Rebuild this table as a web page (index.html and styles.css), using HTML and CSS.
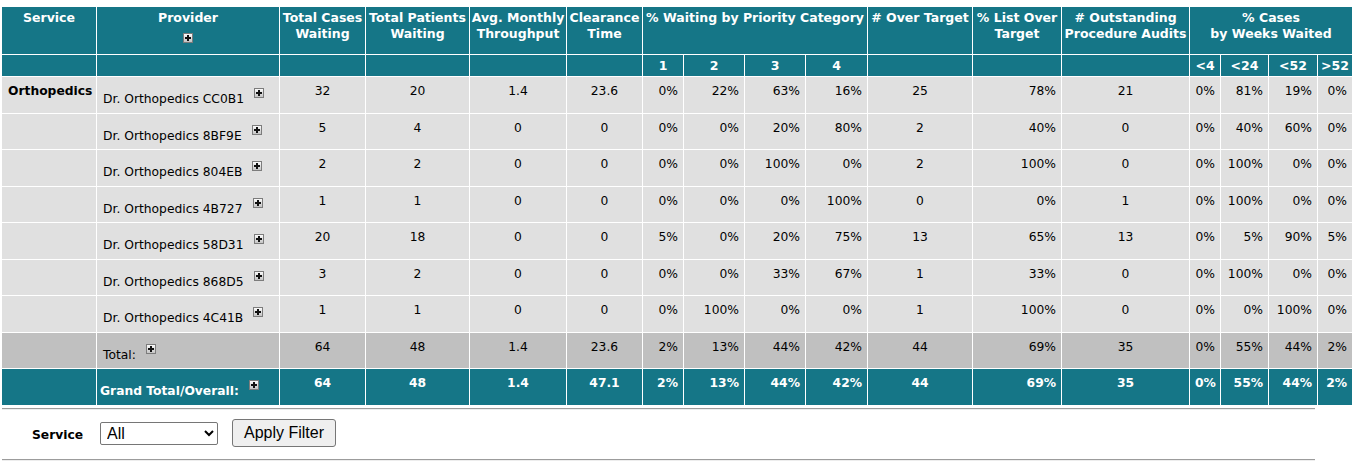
FILE: index.html
```html
<!DOCTYPE html>
<html>
<head>
<meta charset="utf-8">
<link rel="stylesheet" href="styles.css">
</head>
<body>
<table class="grid">
<colgroup>
<col class="w-svc"><col class="w-prov"><col class="w-tc"><col class="w-tp"><col class="w-avg"><col class="w-clr"><col class="w-p1"><col class="w-p2"><col class="w-p3"><col class="w-p4"><col class="w-over"><col class="w-list"><col class="w-aud"><col class="w-k1"><col class="w-k2"><col class="w-k3"><col class="w-k4">
</colgroup>
<thead>
<tr class="hd hd1">
<th>Service</th>
<th>Provider<br><i class="plus"></i></th>
<th>Total Cases<br>Waiting</th>
<th>Total Patients<br>Waiting</th>
<th>Avg. Monthly<br>Throughput</th>
<th>Clearance<br>Time</th>
<th colspan="4">% Waiting by Priority Category</th>
<th># Over Target</th>
<th>% List Over<br>Target</th>
<th># Outstanding<br>Procedure Audits</th>
<th colspan="4">% Cases<br>by Weeks Waited</th>
</tr>
<tr class="hd hd2">
<th></th><th></th><th></th><th></th><th></th><th></th>
<th>1</th><th>2</th><th>3</th><th>4</th>
<th></th><th></th><th></th>
<th>&lt;4</th><th>&lt;24</th><th>&lt;52</th><th>&gt;52</th>
</tr>
</thead>
<tbody>
<tr class="row">
<td class="svc">Orthopedics</td>
<td class="prov"><div class="pv"><span class="nm">Dr. Orthopedics CC0B1</span><i class="plus"></i></div></td>
<td class="c">32</td><td class="c">20</td><td class="c">1.4</td><td class="c">23.6</td>
<td class="r">0%</td><td class="r">22%</td><td class="r">63%</td><td class="r">16%</td>
<td class="c">25</td><td class="r">78%</td><td class="c">21</td>
<td class="r">0%</td><td class="r">81%</td><td class="r">19%</td><td class="r">0%</td>
</tr>
<tr class="row">
<td class="svc"></td>
<td class="prov"><div class="pv"><span class="nm">Dr. Orthopedics 8BF9E</span><i class="plus"></i></div></td>
<td class="c">5</td><td class="c">4</td><td class="c">0</td><td class="c">0</td>
<td class="r">0%</td><td class="r">0%</td><td class="r">20%</td><td class="r">80%</td>
<td class="c">2</td><td class="r">40%</td><td class="c">0</td>
<td class="r">0%</td><td class="r">40%</td><td class="r">60%</td><td class="r">0%</td>
</tr>
<tr class="row">
<td class="svc"></td>
<td class="prov"><div class="pv"><span class="nm">Dr. Orthopedics 804EB</span><i class="plus"></i></div></td>
<td class="c">2</td><td class="c">2</td><td class="c">0</td><td class="c">0</td>
<td class="r">0%</td><td class="r">0%</td><td class="r">100%</td><td class="r">0%</td>
<td class="c">2</td><td class="r">100%</td><td class="c">0</td>
<td class="r">0%</td><td class="r">100%</td><td class="r">0%</td><td class="r">0%</td>
</tr>
<tr class="row">
<td class="svc"></td>
<td class="prov"><div class="pv"><span class="nm">Dr. Orthopedics 4B727</span><i class="plus"></i></div></td>
<td class="c">1</td><td class="c">1</td><td class="c">0</td><td class="c">0</td>
<td class="r">0%</td><td class="r">0%</td><td class="r">0%</td><td class="r">100%</td>
<td class="c">0</td><td class="r">0%</td><td class="c">1</td>
<td class="r">0%</td><td class="r">100%</td><td class="r">0%</td><td class="r">0%</td>
</tr>
<tr class="row">
<td class="svc"></td>
<td class="prov"><div class="pv"><span class="nm">Dr. Orthopedics 58D31</span><i class="plus"></i></div></td>
<td class="c">20</td><td class="c">18</td><td class="c">0</td><td class="c">0</td>
<td class="r">5%</td><td class="r">0%</td><td class="r">20%</td><td class="r">75%</td>
<td class="c">13</td><td class="r">65%</td><td class="c">13</td>
<td class="r">0%</td><td class="r">5%</td><td class="r">90%</td><td class="r">5%</td>
</tr>
<tr class="row">
<td class="svc"></td>
<td class="prov"><div class="pv"><span class="nm">Dr. Orthopedics 868D5</span><i class="plus"></i></div></td>
<td class="c">3</td><td class="c">2</td><td class="c">0</td><td class="c">0</td>
<td class="r">0%</td><td class="r">0%</td><td class="r">33%</td><td class="r">67%</td>
<td class="c">1</td><td class="r">33%</td><td class="c">0</td>
<td class="r">0%</td><td class="r">100%</td><td class="r">0%</td><td class="r">0%</td>
</tr>
<tr class="row">
<td class="svc"></td>
<td class="prov"><div class="pv"><span class="nm">Dr. Orthopedics 4C41B</span><i class="plus"></i></div></td>
<td class="c">1</td><td class="c">1</td><td class="c">0</td><td class="c">0</td>
<td class="r">0%</td><td class="r">100%</td><td class="r">0%</td><td class="r">0%</td>
<td class="c">1</td><td class="r">100%</td><td class="c">0</td>
<td class="r">0%</td><td class="r">0%</td><td class="r">100%</td><td class="r">0%</td>
</tr>
<tr class="row total">
<td class="svc"></td>
<td class="prov"><div class="pv"><span class="nm">Total:</span><i class="plus"></i></div></td>
<td class="c">64</td><td class="c">48</td><td class="c">1.4</td><td class="c">23.6</td>
<td class="r">2%</td><td class="r">13%</td><td class="r">44%</td><td class="r">42%</td>
<td class="c">44</td><td class="r">69%</td><td class="c">35</td>
<td class="r">0%</td><td class="r">55%</td><td class="r">44%</td><td class="r">2%</td>
</tr>
<tr class="row grand">
<td class="svc"></td>
<td class="prov"><div class="pv"><span class="nm gname">Grand Total/Overall:</span><i class="plus"></i></div></td>
<td class="c">64</td><td class="c">48</td><td class="c">1.4</td><td class="c">47.1</td>
<td class="r">2%</td><td class="r">13%</td><td class="r">44%</td><td class="r">42%</td>
<td class="c">44</td><td class="r">69%</td><td class="c">35</td>
<td class="r">0%</td><td class="r">55%</td><td class="r">44%</td><td class="r">2%</td>
</tr>
</tbody>
</table>
<hr class="sep">
<div class="filter">
<label class="flabel">Service</label>
<select class="fsel"><option>All</option></select>
<button class="fbtn" type="button">Apply Filter</button>
</div>
<hr class="sep">
</body>
</html>
```
FILE: styles.css
```css
* { box-sizing: border-box; }
body {
  margin: 0;
  padding: 6px 0 0 1px;
  font-family: Verdana, "DejaVu Sans", sans-serif;
  font-size: 12.3px;
  color: #000;
  background: #fff;
}
.grid {
  border-collapse: separate;
  border-spacing: 1px;
  table-layout: fixed;
  width: 1352px;
}
.w-svc { width: 94px; }
.w-prov { width: 182px; }
.w-tc { width: 85px; }
.w-tp { width: 103px; }
.w-avg { width: 96px; }
.w-clr { width: 75px; }
.w-p1 { width: 40px; }
.w-p2 { width: 60px; }
.w-p3 { width: 60px; }
.w-p4 { width: 61px; }
.w-over { width: 104px; }
.w-list { width: 88px; }
.w-aud { width: 127px; }
.w-k1 { width: 30px; }
.w-k2 { width: 47px; }
.w-k3 { width: 48px; }
.w-k4 { width: 34px; }
.grid th, .grid td {
  padding: 0 5px;
  vertical-align: top;
  white-space: nowrap;
  overflow: hidden;
}
.hd th {
  background: #157687;
  color: #fff;
  font-weight: bold;
  font-size: 12.5px;
  text-align: center;
}
.hd1 th {
  height: 47px;
  padding: 3px 0 0;
  line-height: 16px;
}
.hd2 th {
  height: 21px;
  padding: 0;
  line-height: 21px;
}
.hd1 .plus { margin-top: 7px; }
.row td {
  background: #e0e0e0;
  height: 35.5px;
  padding-top: 7px;
  line-height: 15px;
}
.row .c { text-align: center; }
.row .r { text-align: right; }
.row .svc { font-weight: bold; padding-left: 6px; }
.row .prov { padding-left: 6px; }
.pv { display: flex; align-items: flex-start; }
.nm { padding-top: 8px; }
.pv .plus { margin-left: 10px; margin-top: 4px; }
.total td { background: #c0c0c0; }
.grand td {
  background: #157687;
  color: #fff;
  font-weight: bold;
}
.grand .prov { padding-left: 3px; }
.plus {
  display: inline-block;
  position: relative;
  width: 10px;
  height: 10px;
  border: 1px solid #7c7c7c;
  background: linear-gradient(#fafafa, #c4c4c4);
  vertical-align: top;
}
.plus::before, .plus::after {
  content: "";
  position: absolute;
  background: #111;
}
.plus::before { left: 1px; top: 3px; width: 6px; height: 2px; }
.plus::after { left: 3px; top: 1px; width: 2px; height: 6px; }
.sep {
  width: 1313px;
  margin: 2px 0 0 1px;
  height: 2px;
  border: 0;
  border-top: 1px solid #9c9c9c;
  border-bottom: 1px solid #ededed;
}
.filter {
  display: flex;
  align-items: center;
  height: 47px;
  padding-left: 31px;
}
.flabel {
  font-weight: bold;
  font-size: 12.3px;
  width: 68px;
  padding-top: 4px;
}
.fsel {
  width: 118px;
  height: 23px;
  font-family: "Liberation Sans", Arial, sans-serif;
  font-size: 16px;
  border: 1px solid #767676;
  border-radius: 2px;
  background: #fff;
  color: #000;
  padding: 0 2px;
}
.fbtn {
  margin-left: 14px;
  width: 104px;
  height: 28px;
  font-family: "Liberation Sans", Arial, sans-serif;
  font-size: 16px;
  color: #000;
  background: #efefef;
  border: 1px solid #767676;
  border-radius: 3px;
  padding: 0;
}
```
